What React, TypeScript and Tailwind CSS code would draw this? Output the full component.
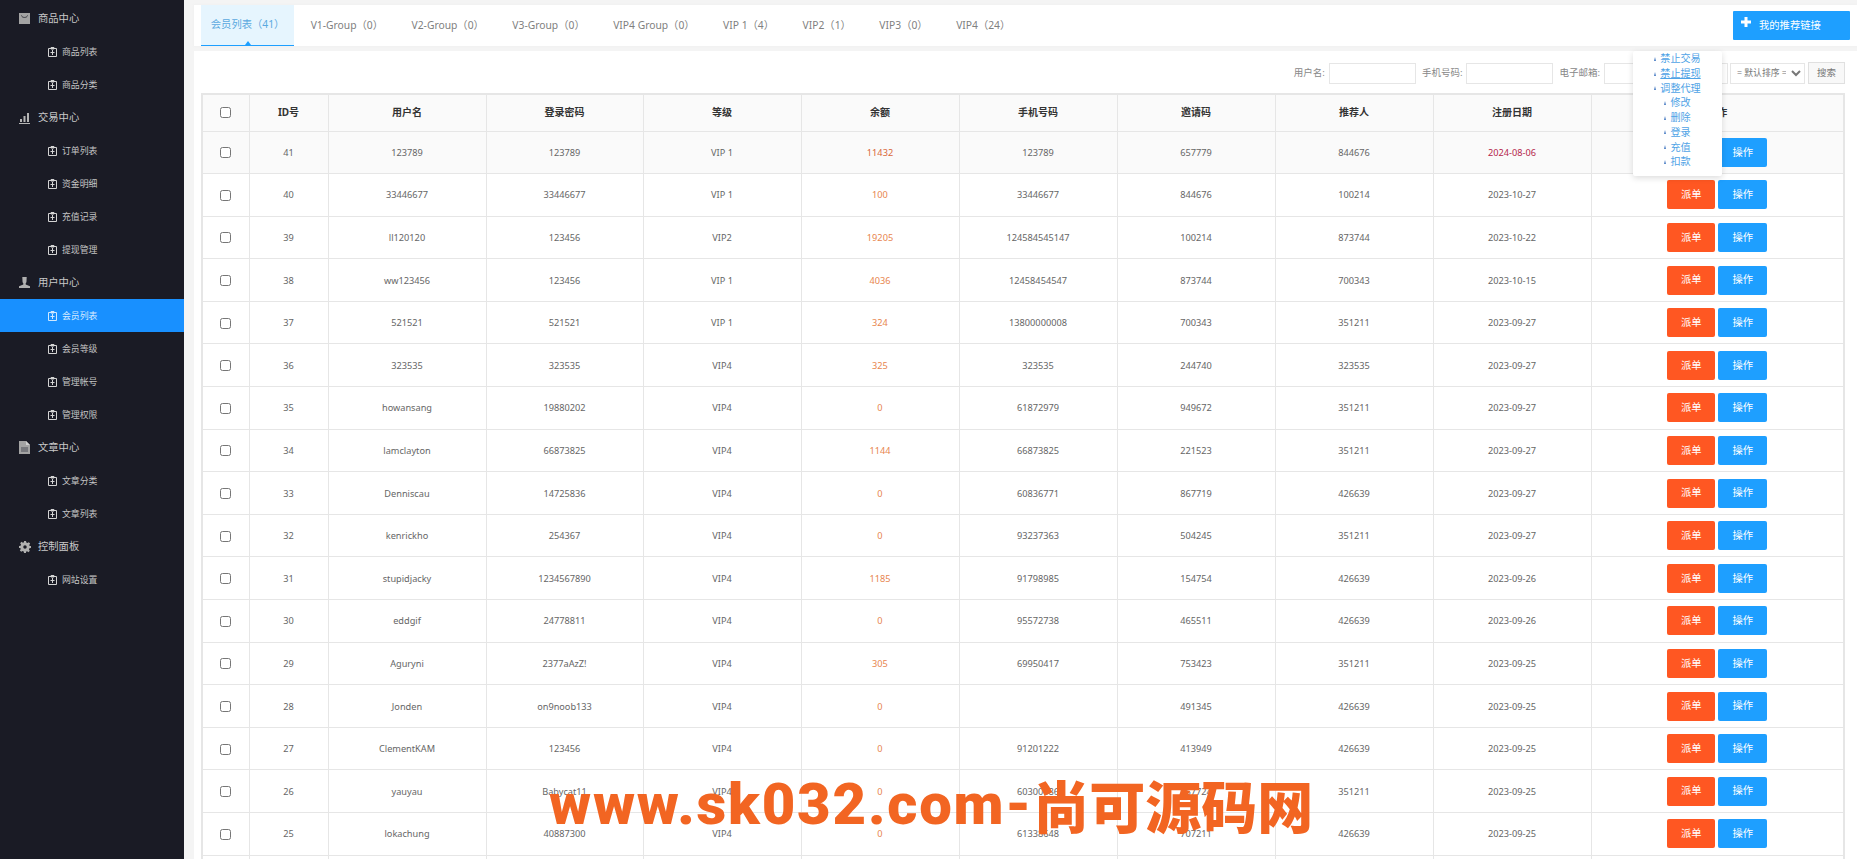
import React from "react";

const FONT = "font-['Noto_Sans','Noto_Sans_CJK_SC',sans-serif]";

function ChildIcon({ color = "#d4d4d4" }: { color?: string }) {
  return (
    <svg width="9" height="10" viewBox="0 0 9 10" className="shrink-0" fill="none" stroke={color} strokeWidth="1">
      <path d="M.5 1.5h8v8h-8z" />
      <path d="M3 .5h3v1.5H3z" />
      <path d="M4.5 3v5M2.5 5.5h4" />
    </svg>
  );
}

function BagIcon() {
  return (
    <svg width="11" height="11" viewBox="0 0 11 11" className="shrink-0">
      <rect width="11" height="11" fill="#a3a3a3" />
      <path d="M2.5 2.5c.5 2.6 5.5 2.6 6 0" stroke="#33343c" strokeWidth="1" fill="none" />
    </svg>
  );
}

function ChartIcon() {
  return (
    <svg width="11" height="12" viewBox="0 0 11 12" className="shrink-0" fill="#b5b5b5">
      <rect x="1" y="7" width="2" height="3" />
      <rect x="4.5" y="4" width="2" height="6" />
      <rect x="8" y="1" width="2" height="9" />
      <rect x="0" y="11" width="11" height="1" />
    </svg>
  );
}

function UserIcon() {
  return (
    <svg width="11" height="11" viewBox="0 0 11 11" className="shrink-0" fill="#b0b0b0">
      <path d="M3.3 0h4.4l-.2 4.2c0 1-.4 1.6-.8 2v1.3L11 9.2V11H0V9.2l4.3-1.7V6.2c-.4-.4-.8-1-.8-2z" />
    </svg>
  );
}

function FileIcon() {
  return (
    <svg width="11" height="13" viewBox="0 0 11 13" className="shrink-0">
      <path d="M0 0h7l4 4v9H0z" fill="#a3a3a3" />
      <path d="M7 0l4 4H7z" fill="#d0d0d0" />
      <rect x="2" y="6" width="7" height="5" fill="#77787d" />
    </svg>
  );
}

function CogIcon() {
  return (
    <svg width="12" height="12" viewBox="0 0 24 24" className="shrink-0" fill="#b0b0b0">
      <path
        fillRule="evenodd"
        d="M10 0h4l.6 3.2 2.2.9 2.7-1.8 2.8 2.8-1.8 2.7.9 2.2L24 10v4l-3.200.6-.9 2.2 1.800 2.700-2.800 2.800-2.700-1.800-2.200.9L14 24h-4l-.6-3.200-2.200-.9-2.700 1.800-2.800-2.800 1.800-2.700-.9-2.200L0 14v-4l3.200-.6.9-2.200-1.800-2.700 2.800-2.800 2.700 1.800 2.200-.9zM12 8.500a3.500 3.500 0 100 7 3.500 3.500 0 000-7z"
      />
    </svg>
  );
}

type Nav = { label: string; icon?: React.ReactNode; active?: boolean };

const nav: Nav[] = [
  { label: "商品中心", icon: <BagIcon /> },
  { label: "商品列表" },
  { label: "商品分类" },
  { label: "交易中心", icon: <ChartIcon /> },
  { label: "订单列表" },
  { label: "资金明细" },
  { label: "充值记录" },
  { label: "提现管理" },
  { label: "用户中心", icon: <UserIcon /> },
  { label: "会员列表", active: true },
  { label: "会员等级" },
  { label: "管理帐号" },
  { label: "管理权限" },
  { label: "文章中心", icon: <FileIcon /> },
  { label: "文章分类" },
  { label: "文章列表" },
  { label: "控制面板", icon: <CogIcon /> },
  { label: "网站设置" },
];

const tabs = [
  "会员列表（41）",
  "V1-Group（0）",
  "V2-Group（0）",
  "V3-Group（0）",
  "VIP4 Group（0）",
  "VIP 1（4）",
  "VIP2（1）",
  "VIP3（0）",
  "VIP4（24）",
];

const rows: string[][] = [
  ["41", "123789", "123789", "VIP 1", "11432", "123789", "657779", "844676", "2024-08-06"],
  ["40", "33446677", "33446677", "VIP 1", "100", "33446677", "844676", "100214", "2023-10-27"],
  ["39", "ll120120", "123456", "VIP2", "19205", "124584545147", "100214", "873744", "2023-10-22"],
  ["38", "ww123456", "123456", "VIP 1", "4036", "12458454547", "873744", "700343", "2023-10-15"],
  ["37", "521521", "521521", "VIP 1", "324", "13800000008", "700343", "351211", "2023-09-27"],
  ["36", "323535", "323535", "VIP4", "325", "323535", "244740", "323535", "2023-09-27"],
  ["35", "howansang", "19880202", "VIP4", "0", "61872979", "949672", "351211", "2023-09-27"],
  ["34", "lamclayton", "66873825", "VIP4", "1144", "66873825", "221523", "351211", "2023-09-27"],
  ["33", "Denniscau", "14725836", "VIP4", "0", "60836771", "867719", "426639", "2023-09-27"],
  ["32", "kenrickho", "254367", "VIP4", "0", "93237363", "504245", "351211", "2023-09-27"],
  ["31", "stupidjacky", "1234567890", "VIP4", "1185", "91798985", "154754", "426639", "2023-09-26"],
  ["30", "eddgif", "24778811", "VIP4", "0", "95572738", "465511", "426639", "2023-09-26"],
  ["29", "Aguryni", "2377aAzZ!", "VIP4", "305", "69950417", "753423", "351211", "2023-09-25"],
  ["28", "Jonden", "on9noob133", "VIP4", "0", "", "491345", "426639", "2023-09-25"],
  ["27", "ClementKAM", "123456", "VIP4", "0", "91201222", "413949", "426639", "2023-09-25"],
  ["26", "yauyau", "Babycat11", "VIP4", "0", "60300086", "167724", "351211", "2023-09-25"],
  ["25", "lokachung", "40887300", "VIP4", "0", "61338648", "707211", "426639", "2023-09-25"],
];

const heads = ["ID号", "用户名", "登录密码", "等级", "余额", "手机号码", "邀请码", "推荐人", "注册日期", "操作"];

const menu = [
  { t: "禁止交易", sub: false },
  { t: "禁止提现", sub: false, u: true },
  { t: "调整代理", sub: false },
  { t: "修改", sub: true },
  { t: "删除", sub: true },
  { t: "登录", sub: true },
  { t: "充值", sub: true },
  { t: "扣款", sub: true },
];

const th = "border border-[#e6e6e6] font-bold text-[10px] text-[#333] bg-[#fafafa]";
const td = "border border-[#e6e6e6] text-center text-[9.2px] text-[#666]";

export default function App() {
  return (
    <div className={`flex h-[859px] w-[1857px] overflow-hidden bg-[#f4f4f4] ${FONT}`}>
      <aside className="w-[184px] shrink-0 bg-[#1a1b25] pt-[2px]">
        {nav.map((n) =>
          n.icon ? (
            <div key={n.label} className="flex h-[33px] items-center pl-[19px] text-[10.3px] text-[#c9c9c9]">
              <span className="flex w-[19px] shrink-0">{n.icon}</span>
              {n.label}
            </div>
          ) : (
            <div
              key={n.label}
              className={`flex h-[33px] items-center gap-[5px] pl-[48px] text-[8.9px] ${
                n.active ? "bg-[#1890ff] text-[#d8ecff]" : "text-[#c4c4c4]"
              }`}
            >
              <ChildIcon color={n.active ? "#cfe8ff" : "#d4d4d4"} />
              {n.label}
            </div>
          )
        )}
      </aside>

      <main className="relative flex flex-1 flex-col pl-[10px] pr-[2px] pt-[5px]">
        <div className="flex h-[41px] shrink-0 items-stretch justify-between bg-white pl-[7px] pr-[8px] shadow-[0_0_3px_#eeeeee]">
          <div className="flex">
            {tabs.map((t, i) => (
              <div
                key={t}
                className={`relative flex items-center whitespace-nowrap text-[10.300px] ${
                  i === 0
                    ? "border-b border-[#1e9fff] bg-[#e6f5fe] px-[9.800px] text-[#5aa9e0]"
                    : "pl-[16.500px] pr-[12px] text-[#808080]"
                }`}
              >
                {t}
                {i === 0 && (
                  <span className="absolute bottom-0 left-1/2 -ml-[3px] h-0 w-0 border-x-[3px] border-b-[4px] border-x-transparent border-b-[#1e9fff]" />
                )}
              </div>
            ))}
          </div>
          <button className="mt-[6px] flex h-[29px] w-[117px] items-start rounded-[1px] bg-[#1e9fff] pl-[8px] pt-[6px] text-[10.300px] text-white">
            <svg width="10" height="10" viewBox="0 0 10 10" fill="#fff" className="shrink-0">
              <path d="M3.500 0h3v3.500H10v3H6.500V10h-3V6.500H0v-3h3.500z" />
            </svg>
            <span className="ml-[8px] mt-[1px] leading-[15px]">我的推荐链接</span>
          </button>
        </div>

        <section className="mt-[5px] flex-1 bg-white pl-[7px] pr-[13px] pt-[11px]">
          <div className="flex h-[22px] items-center justify-end text-[9.500px] text-[#888]">
            <span className="mr-[4px]">用户名:</span>
            <input className="h-[21px] w-[87px] border border-[#e6e6e6] bg-white" />
            <span className="ml-[6px] mr-[4px]">手机号码:</span>
            <input className="h-[21px] w-[87px] border border-[#e6e6e6] bg-white" />
            <span className="ml-[6px] mr-[4px]">电子邮箱:</span>
            <input className="h-[21px] w-[124px] border border-[#e6e6e6] bg-white" />
            <select className="ml-[2px] h-[21px] w-[75px] border border-[#e6e6e6] bg-white px-[2px] text-[8.800px] text-[#777]">
              <option>= 默认排序 =</option>
            </select>
            <button className="ml-[3px] h-[22px] w-[37px] border border-[#e0e0e0] bg-[#f8f8f8] text-[9.500px] text-[#777]">搜索</button>
          </div>

          <table className="mt-[9px] w-[1642px] table-fixed border-collapse border-2 border-[#e6e6e6]">
            <colgroup>
              <col className="w-[47px]" />
              <col className="w-[79px]" />
              <col className="w-[158px]" />
              <col className="w-[157px]" />
              <col className="w-[158px]" />
              <col className="w-[158px]" />
              <col className="w-[158px]" />
              <col className="w-[158px]" />
              <col className="w-[158px]" />
              <col className="w-[158px]" />
              <col className="w-[253px]" />
            </colgroup>
            <thead>
              <tr className="h-[37px]">
                <th className={th}>
                  <input type="checkbox" className="block mx-auto h-[11px] w-[11px]" />
                </th>
                {heads.map((h) => (
                  <th key={h} className={th}>
                    {h}
                  </th>
                ))}
              </tr>
            </thead>
            <tbody>
              {rows.map((r, i) => (
                <tr key={r[0]} className={`h-[42.600px] ${i === 0 ? "bg-[#fafafa]" : ""}`}>
                  <td className={`${td} pt-[1px]`}>
                    <input type="checkbox" className="block mx-auto h-[11px] w-[11px]" />
                  </td>
                  {r.map((c, j) => (
                    <td
                      key={j}
                      className={`${td} pt-[1px] ${j === 4 ? (i === 0 ? "!text-[#d9683a]" : "!text-[#e8864f]") : ""} ${
                        j === 8 && i === 0 ? "!text-[#b5264c]" : ""
                      }`}
                    >
                      {c}
                    </td>
                  ))}
                  <td className={td}>
                    <div className="flex justify-center gap-[3px]">
                      <button className="h-[29px] w-[48px] rounded-[2px] bg-[#ff5722] text-[10.300px] text-white">派单</button>
                      <button className="h-[29px] w-[49px] rounded-[2px] bg-[#1e9fff] text-[10.300px] text-white">操作</button>
                    </div>
                  </td>
                </tr>
              ))}
              <tr className="h-[42.600px]">
                {Array.from({ length: 11 }).map((_, i) => (
                  <td key={i} className={td} />
                ))}
              </tr>
            </tbody>
          </table>
        </section>

        <div className="absolute left-[1449px] top-[51px] flex h-[125px] w-[89px] flex-col items-center rounded-[2px] bg-white pt-[0.600px] shadow-[0_2px_6px_rgba(0,0,0,0.14)]">
          {menu.map((m) => (
            <div key={m.t} className="flex h-[14.700px] items-center text-[10.100px] text-[#4fa3e6]">
              <span className="mr-[4px] h-0 w-0 border-x-[1.500px] border-b-[4px] border-x-transparent border-b-[#4d7fc4]" />
              <span className={m.u ? "underline" : ""}>{m.t}</span>
            </div>
          ))}
        </div>
      </main>

      <div className="pointer-events-none absolute left-[549px] top-[771px] flex items-center whitespace-nowrap font-['Roboto','Noto_Sans_CJK_SC',sans-serif] text-[58px] font-black leading-[66px] text-[#f26522]">
        <span className="tracking-[1.800px]">www.sk032.com-</span>
        <span className="text-[56px] font-['Noto_Sans_CJK_SC',sans-serif]">尚可源码网</span>
      </div>
    </div>
  );
}
